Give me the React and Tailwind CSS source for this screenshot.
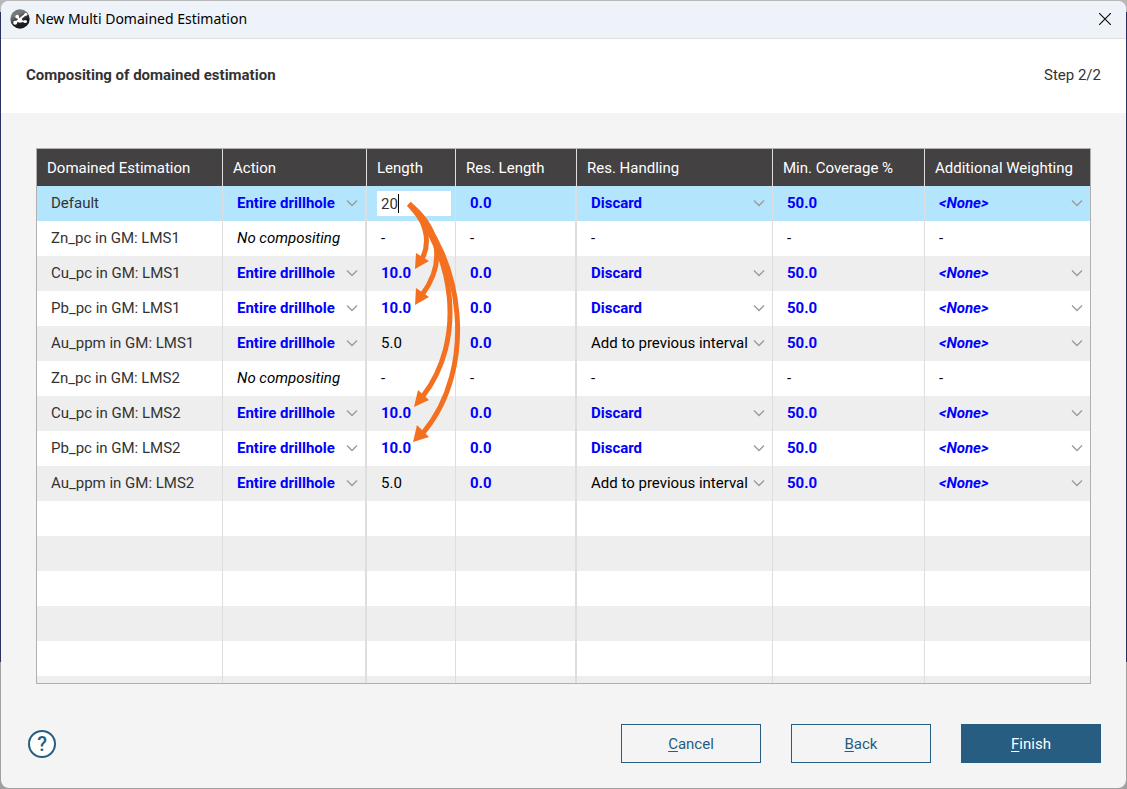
import { useState } from 'react';
import clsx from 'clsx';

const columns = [
  { label: 'Domained Estimation', width: 'w-[186px]' },
  { label: 'Action', width: 'w-[144px]' },
  { label: 'Length', width: 'w-[89px]' },
  { label: 'Res. Length', width: 'w-[121px]' },
  { label: 'Res. Handling', width: 'w-[196px]' },
  { label: 'Min. Coverage %', width: 'w-[152px]' },
  { label: 'Additional Weighting', width: 'w-[165px]' }
];

const initialRows = [
  { name: 'Default', length: '20', handling: 'Discard', editing: true },
  { name: 'Zn_pc in GM: LMS1', skipped: true },
  { name: 'Cu_pc in GM: LMS1', length: '10.0', handling: 'Discard' },
  { name: 'Pb_pc in GM: LMS1', length: '10.0', handling: 'Discard' },
  { name: 'Au_ppm in GM: LMS1', length: '5.0', handling: 'Add to previous interval' },
  { name: 'Zn_pc in GM: LMS2', skipped: true },
  { name: 'Cu_pc in GM: LMS2', length: '10.0', handling: 'Discard' },
  { name: 'Pb_pc in GM: LMS2', length: '10.0', handling: 'Discard' },
  { name: 'Au_ppm in GM: LMS2', length: '5.0', handling: 'Add to previous interval' }
];

const inherited = 'font-bold text-[#0000ff]';

const AppLogo = () => (
  <svg viewBox="0 0 20 20" className="w-5 h-5" aria-hidden="true">
    <defs>
      <linearGradient id="logo" x1="0" y1="0" x2="0.5" y2="1">
        <stop offset="0.35" stopColor="#777" />
        <stop offset="0.75" stopColor="#1c1c1e" />
      </linearGradient>
    </defs>
    <circle cx="10" cy="10" r="9.7" fill="url(#logo)" />
    <path d="M5 14 16 5M7.4 7.8l2.4 3.6M10 12.2l5.4.4" stroke="#fff" strokeWidth="1.7" fill="none" />
    <circle cx="7.2" cy="7.6" r="1.9" fill="#fff" />
    <circle cx="15.8" cy="5.2" r="1.5" fill="#fff" />
    <circle cx="5.2" cy="13.8" r="2" fill="#fff" />
    <circle cx="10" cy="11.4" r="2.4" fill="#fff" />
    <circle cx="15.4" cy="12.5" r="1.6" fill="#fff" />
  </svg>
);

// Shows which rows take their length from the Default row
const InheritanceArrows = () => (
  <svg
    viewBox="0 0 100 270"
    className="absolute left-0 top-0 z-10 w-[100px] h-[270px] pointer-events-none"
    aria-hidden="true"
  >
    <g fill="none" stroke="#f37021" strokeWidth="5">
      <path d="M42 18C57 31 65 54 55 73" />
      <path d="M42 18C65 36 84 70 55 109" />
      <path d="M42 18C88 69 99 154 56 210" />
      <path d="M42 18C96 69 111 182 56 247" />
    </g>
    <g fill="#f37021">
      <path d="M48 83 49 67 62 75Z" />
      <path d="M48 119 49 102 62 111Z" />
      <path d="M47 221 51 204 62 214Z" />
      <path d="M46 256 50 239 62 251Z" />
    </g>
  </svg>
);

const SelectCell = ({ label, value, options, className }) => (
  <div className="relative">
    <select
      aria-label={label}
      defaultValue={value}
      className={clsx('block w-full h-[35px] pl-[14px] pr-6 pb-0.5 appearance-none bg-transparent outline-none', className)}
    >
      {options.map((option) => (
        <option key={option}>{option}</option>
      ))}
    </select>
    <svg
      viewBox="0 0 12 8"
      className="absolute right-[7px] top-[13px] w-3 h-2 pointer-events-none"
      fill="none"
      stroke="#9a9a9a"
      strokeWidth="1.3"
      aria-hidden="true"
    >
      <path d="M1 1.5 6 6.5 11 1.5" />
    </svg>
  </div>
);

const Cell = ({ className, children }) => (
  <td className={clsx('relative p-0 border-r border-[#dedede] last:border-r-0', className)}>{children}</td>
);

const TextCell = ({ className, children }) => <Cell className={clsx('pl-[14px] pb-0.5', className)}>{children}</Cell>;

const EstimationRow = ({ row }) => {
  const [length, setLength] = useState(row.length);

  if (row.skipped) {
    return (
      <tr className="h-[35px] even:bg-white odd:bg-[#eee]">
        <TextCell className="text-[#333]">{row.name}</TextCell>
        <TextCell className="italic border-r-2">No compositing</TextCell>
        <TextCell>-</TextCell>
        <TextCell className="border-r-2">-</TextCell>
        <TextCell>-</TextCell>
        <TextCell>-</TextCell>
        <TextCell>-</TextCell>
      </tr>
    );
  }

  return (
    <tr className={clsx('h-[35px]', row.editing ? 'bg-[#b3e5fc]' : 'even:bg-white odd:bg-[#eee]')}>
      <TextCell className="text-[#333]">{row.name}</TextCell>
      <Cell className="border-r-2">
        <SelectCell
          label={`Action for ${row.name}`}
          value="Entire drillhole"
          options={['Entire drillhole', 'No compositing']}
          className={inherited}
        />
      </Cell>
      {row.editing ? (
        <Cell>
          <input
            aria-label="Default length"
            value={length}
            onChange={(e) => setLength(e.target.value)}
            className="block w-[74px] h-[25px] ml-[10px] pl-1 bg-white text-[#333] caret-transparent outline-none"
          />
          <span className="absolute left-[31px] top-2 w-px h-[19px] bg-black" />
          <InheritanceArrows />
        </Cell>
      ) : (
        <TextCell className={row.length === '10.0' && inherited}>{row.length}</TextCell>
      )}
      <TextCell className={clsx('border-r-2', inherited)}>0.0</TextCell>
      <Cell>
        <SelectCell
          label={`Residual handling for ${row.name}`}
          value={row.handling}
          options={['Discard', 'Add to previous interval']}
          className={row.handling === 'Discard' && inherited}
        />
      </Cell>
      <TextCell className={inherited}>50.0</TextCell>
      <Cell>
        <SelectCell
          label={`Additional weighting for ${row.name}`}
          value="<None>"
          options={['<None>']}
          className={clsx('italic', inherited)}
        />
      </Cell>
    </tr>
  );
};

const EmptyRow = ({ height = 'h-[35px]' }) => (
  <tr className={clsx(height, 'even:bg-white odd:bg-[#eee]')}>
    {columns.map((column, i) => (
      <Cell key={column.label} className={(i === 1 || i === 3) && 'border-r-2'} />
    ))}
  </tr>
);

const DialogButton = ({ label, primary }) => (
  <button
    className={clsx(
      'w-[140px] h-[39px] border border-[#265d81]',
      primary ? 'bg-[#265d81] text-white' : 'text-[#265d81]'
    )}
  >
    <span className="underline underline-offset-2">{label[0]}</span>
    {label.slice(1)}
  </button>
);

export default function App() {
  return (
    <div className="min-h-screen flex p-px bg-linear-[to_bottom,#b8b8b8_12px,#2a3160_12px,#2a3160_662px,#a0a0a0_662px] font-['Roboto',sans-serif] text-[15px] leading-5 text-black">
      <div className="flex-1 flex flex-col rounded-lg overflow-hidden bg-[#f4f4f4]">
        <header className="h-[38px] shrink-0 flex items-center justify-between pl-[9px] pr-[15px] pb-0.5 bg-[#eef3fa] border-b border-[#e0e0e0]">
          <div className="flex items-center gap-[5px]">
            <AppLogo />
            <h1 className="font-['Noto_Sans',sans-serif] text-[14px]">New Multi Domained Estimation</h1>
          </div>
          <button aria-label="Close">
            <svg viewBox="0 0 12 12" className="w-3 h-3" stroke="#111" strokeWidth="1.2" aria-hidden="true">
              <path d="M0 0 12 12M12 0 0 12" />
            </svg>
          </button>
        </header>

        <div className="h-[74px] shrink-0 flex items-center justify-between px-[25px] pb-0.5 bg-white text-[#333]">
          <h2 className="font-bold">Compositing of domained estimation</h2>
          <span>Step 2/2</span>
        </div>

        <main className="px-[35px] pt-[35px]">
          <div className="border border-[#b0b0b0]">
            <table className="w-full table-fixed border-separate border-spacing-0">
              <thead>
                <tr className="h-[37px] bg-[#444142] text-white">
                  {columns.map((column) => (
                    <th
                      key={column.label}
                      className={clsx(
                        'p-0 pl-[10px] text-left font-normal whitespace-nowrap border-r border-[#dedede] last:border-r-0',
                        column.width
                      )}
                    >
                      {column.label}
                    </th>
                  ))}
                </tr>
              </thead>
              <tbody>
                {initialRows.map((row) => (
                  <EstimationRow key={row.name} row={row} />
                ))}
                {[1, 2, 3, 4, 5].map((n) => (
                  <EmptyRow key={n} />
                ))}
                <EmptyRow height="h-[7px]" />
              </tbody>
            </table>
          </div>
        </main>

        <footer className="flex items-center justify-between pt-10 pb-6 pl-[27px] pr-[25px]">
          <button
            aria-label="Help"
            className="w-7 h-7 flex items-center justify-center rounded-full border-2 border-[#265d81] bg-white text-xl font-medium text-[#265d81]"
          >
            ?
          </button>
          <div className="flex gap-[30px]">
            <DialogButton label="Cancel" />
            <DialogButton label="Back" />
            <DialogButton label="Finish" primary />
          </div>
        </footer>
      </div>
    </div>
  );
}
